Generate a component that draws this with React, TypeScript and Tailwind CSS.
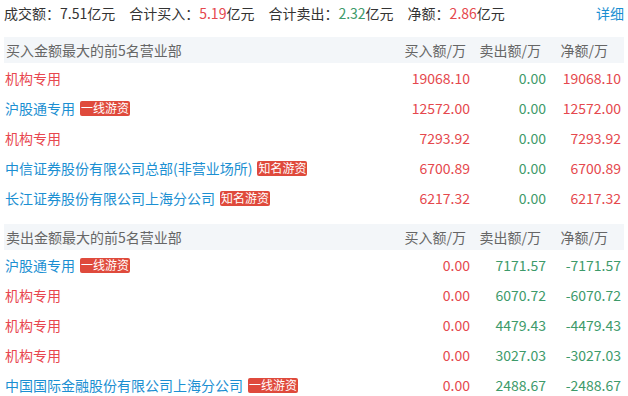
import React from "react";

type Row = {
  name: string;
  tag?: string;
  inst?: boolean;
  buy: string;
  sell: string;
  net: string;
};

const buyRows: Row[] = [
  { name: "机构专用", inst: true, buy: "19068.10", sell: "0.00", net: "19068.10" },
  { name: "沪股通专用", tag: "一线游资", buy: "12572.00", sell: "0.00", net: "12572.00" },
  { name: "机构专用", inst: true, buy: "7293.92", sell: "0.00", net: "7293.92" },
  { name: "中信证券股份有限公司总部(非营业场所)", tag: "知名游资", buy: "6700.89", sell: "0.00", net: "6700.89" },
  { name: "长江证券股份有限公司上海分公司", tag: "知名游资", buy: "6217.32", sell: "0.00", net: "6217.32" },
];

const sellRows: Row[] = [
  { name: "沪股通专用", tag: "一线游资", buy: "0.00", sell: "7171.57", net: "-7171.57" },
  { name: "机构专用", inst: true, buy: "0.00", sell: "6070.72", net: "-6070.72" },
  { name: "机构专用", inst: true, buy: "0.00", sell: "4479.43", net: "-4479.43" },
  { name: "机构专用", inst: true, buy: "0.00", sell: "3027.03", net: "-3027.03" },
  { name: "中国国际金融股份有限公司上海分公司", tag: "一线游资", buy: "0.00", sell: "2488.67", net: "-2488.67" },
];

const RED = "text-[#e5484d]";
const GREEN = "text-[#3d9a6a]";

function Section({ title, rows, side }: { title: string; rows: Row[]; side: "buy" | "sell" }) {
  return (
    <div>
      {/* Header */}
      <div className="grid grid-cols-[1fr_80px_76px_78px] h-[26px] items-center bg-[#f3f6f9] text-[#666] text-[14px]">
        <span className="pl-[2px]">{title}</span>
        <span className="text-right pr-[4px]">买入额/万</span>
        <span className="text-right pr-[5px]">卖出额/万</span>
        <span className="text-right pr-[16px]">净额/万</span>
      </div>
      {rows.map((r, i) => (
        <div key={i} className="grid grid-cols-[1fr_80px_76px_78px] h-[30px] items-center text-[14px]">
          <div className="flex items-center gap-[5px] pl-[1px] whitespace-nowrap">
            <span className={r.inst ? "text-[#e8474f]" : "text-[#1b8fd2]"}>{r.name}</span>
            {r.tag && (
              <span className="bg-[#df4a3c] text-white text-[12px] leading-[14px] h-[15px] px-[1px] rounded-[2px]">
                {r.tag}
              </span>
            )}
          </div>
          <span className={`text-right ${side === "buy" ? RED : RED}`}>{r.buy}</span>
          <span className={`text-right ${side === "sell" ? GREEN : GREEN}`}>{r.sell}</span>
          <span className={`text-right pr-[3px] ${side === "buy" ? RED : GREEN}`}>{r.net}</span>
        </div>
      ))}
    </div>
  );
}

export default function App() {
  return (
    <div
      className="w-[628px] h-[396px] overflow-hidden bg-white px-[4px]"
      style={{ fontFamily: '"Noto Sans CJK SC", "Noto Sans", sans-serif' }}
    >
      {/* Summary line */}
      <div className="flex items-center h-[26px] text-[14px] text-[#333]">
        <span>成交额：7.51亿元</span>
        <span className="ml-[14px]">
          合计买入：<span className={RED}>5.19</span>亿元
        </span>
        <span className="ml-[14px]">
          合计卖出：<span className={GREEN}>2.32</span>亿元
        </span>
        <span className="ml-[14px]">
          净额：<span className={RED}>2.86</span>亿元
        </span>
        <span className="ml-auto text-[#1b8fd2]">详细</span>
      </div>
      <div className="mt-[11px]">
        <Section title="买入金额最大的前5名营业部" rows={buyRows} side="buy" />
      </div>
      <div className="mt-[11px]">
        <Section title="卖出金额最大的前5名营业部" rows={sellRows} side="sell" />
      </div>
    </div>
  );
}
